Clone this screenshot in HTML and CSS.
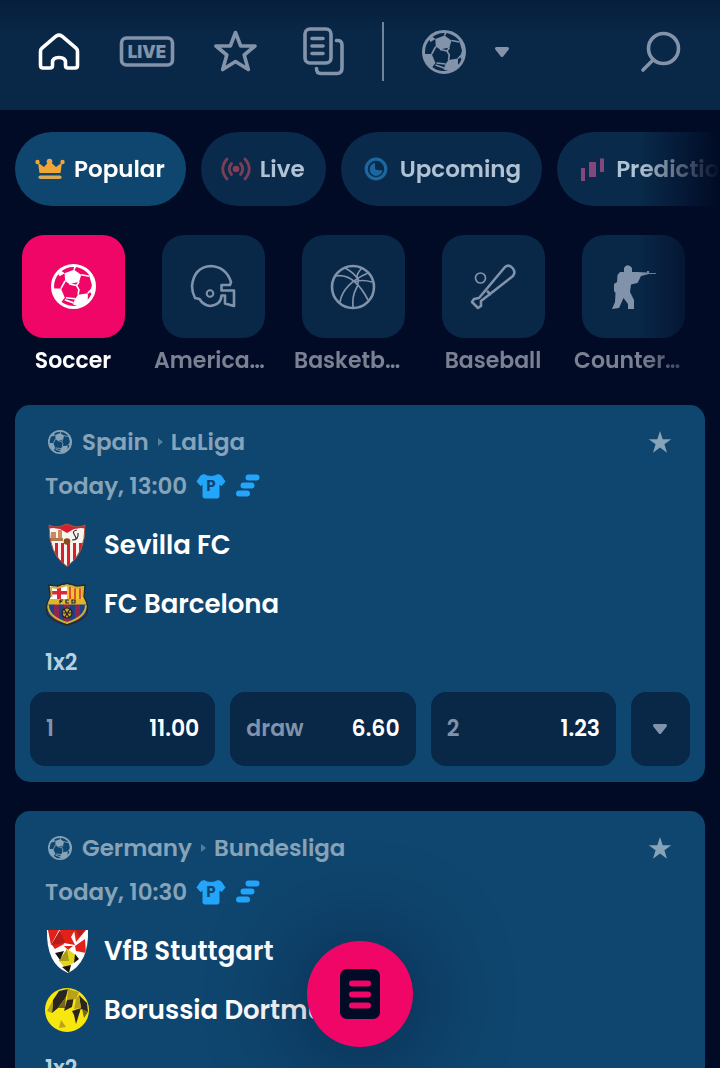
FILE: index.html
```html
<!DOCTYPE html>
<html lang="en">
<head>
<meta charset="utf-8">
<meta name="viewport" content="width=device-width, initial-scale=1">
<title>Sportsbook</title>
<link rel="stylesheet" href="styles.css">
</head>
<body>
<svg class="sprite" aria-hidden="true">
  <symbol id="ball" viewBox="0 0 44 44">
    <circle cx="22" cy="22" r="20.5" fill="none" stroke="currentColor" stroke-width="3"/>
    <g fill="currentColor">
      <path d="M13.300 9 22.500 5.500 29.500 10.500 27.500 17.500 18 19.500 13.800 16.500Z"/>
      <path d="M1.500 24H9.700L13.500 33 9.500 38C5 34.500 2 30 1.500 24Z"/>
      <path d="M26.500 30 36 28.500V36L29 42 21.500 39.500 23.500 34Z"/>
      <path d="M37 10 40 13 43 22 39.500 30 38.200 27 40 20.500Z"/>
      <path d="M7 9.500 10 6.500 13.500 9 8.500 12Z"/>
    </g>
    <path d="M13.800 16.500 9.700 24 M18 19.500 25 21 27.300 25 26.500 30 M23.500 34 14.500 33 M27.500 17.500 25 21 M29.500 10.500 37.500 12 M36 28.500 39.500 25 M22.500 5.500 24 2 M13.500 35 22 38" fill="none" stroke="currentColor" stroke-width="1.600"/>
  </symbol>
  <symbol id="caret" viewBox="0 0 16 12"><path d="M2.500 2.500H13.500L8 9.500Z" fill="currentColor" stroke="currentColor" stroke-width="3" stroke-linejoin="round"/></symbol>
  <symbol id="fav" viewBox="0 0 24 24"><path d="M12 1 14.700 9.200H23.300L16.400 14.300 19 22.700 12 17.600 5 22.700 7.600 14.300.7 9.200H9.300Z" fill="currentColor"/></symbol>
  <symbol id="shirt" viewBox="0 0 30 26">
    <path d="M8.500 1.500C11 4 19 4 21.500 1.500L25 2.500 29 8.500 25.500 12.500 23 11V23.500Q23 25 21.500 25H8.500Q7 25 7 23.500V11L4.500 12.500 1 8.500 5 2.500Z" fill="currentColor" stroke="currentColor" stroke-linejoin="round"/>
  </symbol>
  <symbol id="steps" viewBox="0 0 26 26"><path d="M13.500 4.500H21.500 M8.500 12.500H16.500 M4 20.500H12" fill="none" stroke="currentColor" stroke-width="6" stroke-linecap="round"/></symbol>
</svg>

<div class="app">
  <header class="topbar">
    <nav class="topnav" aria-label="Main">
      <a class="nav-link active" href="#home" aria-label="Home"><svg width="44" height="44" viewBox="0 -1 44 44"><path d="M3.500 20.500Q3.500 18.500 5 17.200L19 5.200Q22 3.200 25 5.200L39 17.200Q40.500 18.500 40.500 20.500V34.500Q40.500 37 38 37H31Q28.500 37 28.500 34.500V31.500Q28.500 26.500 22 26.500T15.500 31.500V34.500Q15.500 37 13 37H6Q3.500 37 3.500 34.500Z" fill="none" stroke="currentColor" stroke-width="3.600" stroke-linejoin="round"/></svg></a>
      <a class="nav-link" href="#live" aria-label="Live"><svg width="56" height="44" viewBox="0 0 56 44"><rect x="2.500" y="8" width="51" height="27" rx="5" fill="none" stroke="currentColor" stroke-width="3.600"/><text class="live-word" x="28" y="27.500" text-anchor="middle">LIVE</text></svg></a>
      <a class="nav-link" href="#favorites" aria-label="Favorites"><svg width="44" height="44" viewBox="0 0 44 44"><path d="M22.500 2.500 27.700 16H42L31.200 25 35.300 39.500 22.500 31.500 9.700 39.500 13.800 25 3 16H17.300Z" fill="none" stroke="currentColor" stroke-width="3.600" stroke-linejoin="round"/></svg></a>
      <a class="nav-link" href="#bets" aria-label="My bets"><svg width="51" height="50" viewBox="-7 0 51 50"><g fill="none" stroke="currentColor" stroke-width="3.600" stroke-linecap="round"><rect x="3" y="2" width="26" height="34" rx="5"/><path d="M10 11.500H21 M10 19H21 M10 26.500H21 M34.500 13.500Q40 13 40 18V41Q40 46.500 35 46.500H19Q14.500 46.500 14.500 41.500"/></g></svg></a>
      <span class="divider"></span>
      <button class="sport-switch" type="button" aria-label="Choose sport"><svg width="44" height="44"><use href="#ball"/></svg><svg width="16" height="12"><use href="#caret"/></svg></button>
    </nav>
    <button class="nav-link search" type="button" aria-label="Search"><svg width="44" height="44" viewBox="0 0 44 44"><g fill="none" stroke="currentColor" stroke-width="3.600" stroke-linecap="round"><circle cx="25.500" cy="18.500" r="15"/><path d="M15 30 5 40"/></g></svg></button>
  </header>

  <main class="content">
    <div class="chips fade">
      <button class="chip active" type="button"><svg width="30" height="26" viewBox="0 0 30 26"><g fill="#f2a638"><path d="M3 6.500 9 11 14.500 5 21 11 27 6.500 25.500 17H4.500Z"/><circle cx="2.500" cy="6" r="2.200"/><circle cx="14.500" cy="5.500" r="2.800"/><circle cx="27.500" cy="6" r="2.200"/></g><rect x="3.500" y="19.500" width="23" height="3.500" rx="1.700" fill="#d9a958"/></svg>Popular</button>
      <button class="chip" type="button"><svg width="30" height="26" viewBox="0 0 30 26"><g fill="none" stroke="#7a3e56" stroke-width="2.800" stroke-linecap="round"><path d="M6 3Q-2.500 13 6 23 M10.500 7.500Q6 13 10.500 18.500 M19.500 7.500Q24 13 19.500 18.500 M24 3Q32.500 13 24 23"/></g><circle cx="15" cy="13" r="3.300" fill="#8c3d55"/></svg>Live</button>
      <button class="chip" type="button"><svg width="30" height="26" viewBox="0 0 30 26"><circle cx="15" cy="13" r="9.800" fill="none" stroke="#1c679f" stroke-width="3.200"/><path d="M14 7A6.500 6.500 0 1 0 21.500 14.500L16 14Q14 14 14 12Z" fill="#1c679f"/></svg>Upcoming</button>
      <button class="chip" type="button"><svg width="30" height="26" viewBox="0 0 30 26"><path d="M4 12H8V25H4Z M12 6H19V21H12Z M23 2.500H27V16H23Z" fill="#82487b"/></svg>Predictions</button>
    </div>

    <nav class="sports fade" aria-label="Sports">
      <a class="sport active" href="#soccer"><span class="tile"><svg width="45" height="45"><use href="#ball"/></svg></span><span class="label">Soccer</span></a>
      <a class="sport" href="#football"><span class="tile"><svg width="46" height="46" viewBox="0 0 46 46"><path d="M40 21H31.500V26.500H44V42L35 39.500V31.500H31.500Q31 41 20 42 13 41 9.500 35L5 34Q2 28 2 22 4 3 21 2 36 3 41 18Z" fill="none" stroke="currentColor" stroke-width="2.600" stroke-linejoin="round"/><circle cx="20" cy="29.500" r="3.300" fill="none" stroke="currentColor" stroke-width="2"/></svg></span><span class="label cut">America…</span></a>
      <a class="sport" href="#basketball"><span class="tile"><svg width="46" height="46" viewBox="0 0 46 46"><g fill="none" stroke="currentColor" stroke-width="1.700"><circle cx="23" cy="23" r="21" stroke-width="2.600"/><path d="M6 12Q24 9 38 36 M15 4Q25 9 29 17 M10 38Q13 20 38 9 M23 44Q22 32 26 25T27 13Q27 9 32 4 M42 18Q32 15 24 18"/></g></svg></span><span class="label cut">Basketb…</span></a>
      <a class="sport" href="#baseball"><span class="tile"><svg width="46" height="46" viewBox="0 0 46 46"><g fill="none" stroke="currentColor" stroke-width="2.600" stroke-linejoin="round"><circle cx="10.500" cy="14" r="5" stroke-width="1.700"/><path d="M35 3Q39 0 42.500 4T43 12L11 37V42L8 44 2 38 4 35 9 34Z M17 27 21 31"/></g></svg></span><span class="label">Baseball</span></a>
      <a class="sport" href="#counter-strike"><span class="tile"><svg width="46" height="46" viewBox="-1 0 46 46"><path d="M13 4Q15 0 19 2L21 4V8H26L36 8.500V7H38V9H45V10H38L30 12 26.500 19 20 20.500 19 28 23 36V45H17V40L12.500 34 8 44 1 45 4 38 4.500 29 3 27V20L6 18 6.500 11 9 8H13Z" fill="currentColor"/></svg></span><span class="label cut">Counter…</span></a>
    </nav>

    <article class="match">
      <div class="league"><svg width="24" height="24"><use href="#ball"/></svg><a href="#spain">Spain</a><svg class="crumb" width="6" height="8" viewBox="0 0 6 8"><path d="M1 0 6 4 1 8Z" fill="currentColor"/></svg><a href="#laliga">LaLiga</a><button class="fav" type="button" aria-label="Add to favorites"><svg width="24" height="24"><use href="#fav"/></svg></button></div>
      <div class="when"><time>Today, 13:00</time><svg width="30" height="26"><use href="#shirt"/><text class="shirt-letter" x="15" y="18" text-anchor="middle">P</text></svg><svg width="26" height="26"><use href="#steps"/></svg></div>
      <div class="teams">
        <div class="team"><svg width="44" height="44" viewBox="0 0 44 44"><clipPath id="sev"><path d="M4 2Q9 5 15 3.500L22 1 29 3.500Q35 5 40 2 40.500 31 22 43.500 3.500 31 4 2Z"/></clipPath><g clip-path="url(#sev)"><path fill="#f7f4ee" d="M0 0H44V44H0Z"/><path fill="#d61f30" d="M0 0H44V6L36 5 29 6 22 10 15 6 8 5 0 6Z M10 20H13V44H10Z M16 20H19V44H16Z M22 20H25V44H22Z M28 20H31V44H28Z M34 20H37V44H34Z"/><path fill="#c98b5f" d="M6 9H11V17H6Z M13 7H17V17H13Z"/><path fill="#b5764d" d="M5 15H18V18H5Z"/><circle cx="22" cy="18.500" r="3.300" fill="#8a4a20"/><path d="M32 7Q27 8 29 11T31 16 M27 17Q34 17 33 10" fill="none" stroke="#333" stroke-width="1.200"/></g><path d="M4 2Q9 5 15 3.500L22 1 29 3.500Q35 5 40 2 40.500 31 22 43.500 3.500 31 4 2Z" fill="none" stroke="#a6513a"/></svg>Sevilla FC</div>
        <div class="team"><svg width="44" height="44" viewBox="0 0 44 44"><clipPath id="bar"><path d="M4 3 12 4 22 1 32 4 40 3 39 15Q45 25 41 33 37 39 22 43 7 39 3 33-1 25 5 15Z"/></clipPath><g clip-path="url(#bar)"><path fill="#1f4287" d="M0 0H44V44H0Z"/><path fill="#fff" d="M4 3H22V18H4Z"/><path fill="#d9273b" d="M12 3H16V18H12Z M4 9H22V12.500H4Z"/><path fill="#f4c431" d="M22 3H40V18H22Z"/><path fill="#dd5130" d="M24 3H26V18H24Z M29 3H31V18H29Z M34 3H36V18H34Z"/><path fill="#8c2653" d="M9 22H14V44H9Z M19 22H25V44H19Z M30 22H35V44H30Z"/><path fill="#dcb82e" d="M0 17H44V22.500H0Z"/><circle cx="22" cy="31" r="5" fill="#c9a62d" stroke="#222" stroke-width="1.200"/><path d="M17 31H27 M19 27 24 35 M25 27 20 35 M15 18V21.500 M15 18H18 M15 19.500H17 M24 18H21V21H24 M27 18V21H30V18Z" fill="none" stroke="#222" stroke-width="1.200"/></g><path d="M6 5 12 6 22 3 32 6 38 5 37.500 15 M6.500 15 6 5 M3 23Q3 35 22 41 41 35 41 23" fill="none" stroke="#cdb134" stroke-width="2"/><path d="M4 3 12 4 22 1 32 4 40 3 39 15Q45 25 41 33 37 39 22 43 7 39 3 33-1 25 5 15Z" fill="none" stroke="#262b26" stroke-width="1.400"/></svg>FC Barcelona</div>
      </div>
      <div class="market">1x2</div>
      <div class="odds">
        <button class="odd" type="button"><span>1</span><b>11.00</b></button>
        <button class="odd" type="button"><span>draw</span><b>6.60</b></button>
        <button class="odd" type="button"><span>2</span><b>1.23</b></button>
        <button class="odd more" type="button" aria-label="More markets"><svg width="16" height="12"><use href="#caret"/></svg></button>
      </div>
    </article>

    <article class="match">
      <div class="league"><svg width="24" height="24"><use href="#ball"/></svg><a href="#germany">Germany</a><svg class="crumb" width="6" height="8" viewBox="0 0 6 8"><path d="M1 0 6 4 1 8Z" fill="currentColor"/></svg><a href="#bundesliga">Bundesliga</a><button class="fav" type="button" aria-label="Add to favorites"><svg width="24" height="24"><use href="#fav"/></svg></button></div>
      <div class="when"><time>Today, 10:30</time><svg width="30" height="26"><use href="#shirt"/><text class="shirt-letter" x="15" y="18" text-anchor="middle">P</text></svg><svg width="26" height="26"><use href="#steps"/></svg></div>
      <div class="teams">
        <div class="team"><svg width="44" height="44" viewBox="0 0 44 44"><clipPath id="stu"><path d="M2 1H43Q44 34 23 44 1 35 2 1Z"/></clipPath><g clip-path="url(#stu)"><path fill="#fff" d="M0 0H44V44H0Z"/><path fill="#e32119" d="M3 1 14 1 6 16Z M15 1 30 1 26 8 30 16 19 14Z M7 16 15 5 19 15 10 20Z M29 1H41L31 13Z M30 17 40 10 41 24 31 22Z M19 17 28 17 23 21Z"/><path fill="#b71c18" d="M15 1 20 14 6 16Z M31 1 34 8 40 1Z"/><path fill="#e6d51e" d="M22 20 31 26 30 33 20 39 14 32Z"/><path fill="#a99b16" d="M22 20 24 32 14 32Z"/><path fill="#19150f" d="M10 24 19 22 15 31Z M30 25 34 30 29 34Z M17 38 26 36 24 44Z"/></g></svg>VfB Stuttgart</div>
        <div class="team"><svg width="44" height="44" viewBox="0 0 44 44"><clipPath id="bvb"><circle cx="22" cy="22" r="22"/></clipPath><g clip-path="url(#bvb)"><path fill="#f8e70e" d="M0 0H44V44H0Z"/><path fill="#292522" d="M14 3 23 1 21 9 13 20 7 25 8 12Z M22 12 30 3 27 19 19 23Z M34 7 42 15 43 24 36 21Z M27 23 36 20 31 36 29 27Z"/><path fill="#b9a21a" d="M23 1 34 4 31 11 22 12Z M34 7 36 20 29 21 31 11Z M14 40 16 32 21 39Z M8 12 2 23 7 25Z"/><path fill="#77651b" d="M21 9 20 20 13 20Z M37 21 43 24 39 30Z"/></g></svg>Borussia Dortmund</div>
      </div>
      <div class="market">1x2</div>
    </article>
  </main>
  <button class="betslip" type="button" aria-label="Bet slip"><svg width="42" height="52" viewBox="0 0 42 52"><rect x="1" y="1" width="40" height="50" rx="7" fill="#010b25"/><path d="M13 15.500H29 M13 26.500H29 M13 37.500H29" stroke="#ef0667" stroke-width="6" stroke-linecap="round"/></svg></button>
</div>
</body>
</html>
```

FILE: styles.css
```css
* { box-sizing: border-box; }
body { margin: 0; background: #010b25; color: #fff; font: 600 22px/32px Poppins, Inter, "Noto Sans", sans-serif; }
button { margin: 0; padding: 0; border: 0; background: none; color: inherit; font: inherit; cursor: pointer; }
a { color: inherit; text-decoration: none; }
svg { display: block; flex: none; }
.sprite { position: absolute; width: 0; height: 0; }
.app { height: 100vh; overflow: hidden; display: flex; flex-direction: column; }

.topbar { flex: none; height: 110px; padding: 0 38px 7px 37px; display: flex; align-items: center; justify-content: space-between; background: linear-gradient(#061f3b, #092747 32px); color: #8393a9; }
.topnav { display: flex; align-items: center; gap: 38px; }
.nav-link.active { color: #fff; }
.divider { width: 2px; height: 59px; margin-left: -2px; background: #71839b; }
.sport-switch { display: flex; align-items: center; gap: 28px; }
.live-word { font: 900 17px Inter, sans-serif; fill: currentColor; }

.content { flex: 1; min-height: 0; padding: 22px 0 0; overflow: hidden; }
.fade { overflow: hidden; -webkit-mask-image: linear-gradient(to left, transparent, #000 80px); mask-image: linear-gradient(to left, transparent, #000 80px); }
.chips { display: flex; gap: 15px; padding-left: 15px; }
.chip { flex: none; height: 74px; padding: 0 21px 0 20px; display: flex; align-items: center; gap: 9px; border-radius: 37px; background: #092a4a; color: #b0c2d4; font-size: 23px; }
.chip.active { background: #0f466f; color: #fff; }

.sports { display: flex; gap: 20px; margin-top: 29px; padding-left: 13px; }
.sport { flex: none; width: 120px; display: flex; flex-direction: column; align-items: center; gap: 7px; color: #7b8192; }
.label { width: 100%; overflow: hidden; text-align: center; white-space: nowrap; }
.label.cut { padding-left: 1px; text-align: left; }
.tile { width: 103px; height: 103px; display: grid; place-items: center; border-radius: 22px; background: #092747; color: #8093aa; }
.sport.active { color: #fff; }
.sport.active .tile { background: #ef0667; color: #fff; }

.match { margin: 28px 15px 0; padding: 15px 15px 16px; border-radius: 15px; background: #0f466f; }
.match + .match { margin-top: 29px; }
.league, .when { height: 44px; display: flex; align-items: center; padding: 0 15px; color: #87a3b8; font-size: 23px; }
.league { gap: 10px; padding: 0 18px; }
.crumb { margin: 0 -2px; opacity: .6; }
.fav { margin-left: auto; }
.when { gap: 9px; }
.when svg { color: #22a5fb; }
.shirt-letter { font: 800 14px Inter, sans-serif; fill: #0f466f; }
.teams { margin-top: 7px; }
.team { height: 59px; padding: 0 15px; display: flex; align-items: center; gap: 15px; font-size: 26px; }
.market { height: 59px; padding: 0 15px; display: flex; align-items: center; color: #b7d0e0; }
.odds { display: grid; grid-template-columns: 1fr 1fr 1fr 59px; gap: 15px; }
.odd { height: 74px; padding: 0 16px; display: flex; align-items: center; justify-content: space-between; border-radius: 15px; background: #092747; color: #8093aa; }
.odd b { color: #fff; font-weight: 600; }
.more { justify-content: center; padding: 0; }

.betslip { position: fixed; left: 50%; bottom: 21px; width: 106px; height: 106px; margin-left: -53px; display: grid; place-items: center; border-radius: 50%; background: #ef0667; box-shadow: 0 4px 90px 12px rgba(1, 11, 37, .4); }
```
